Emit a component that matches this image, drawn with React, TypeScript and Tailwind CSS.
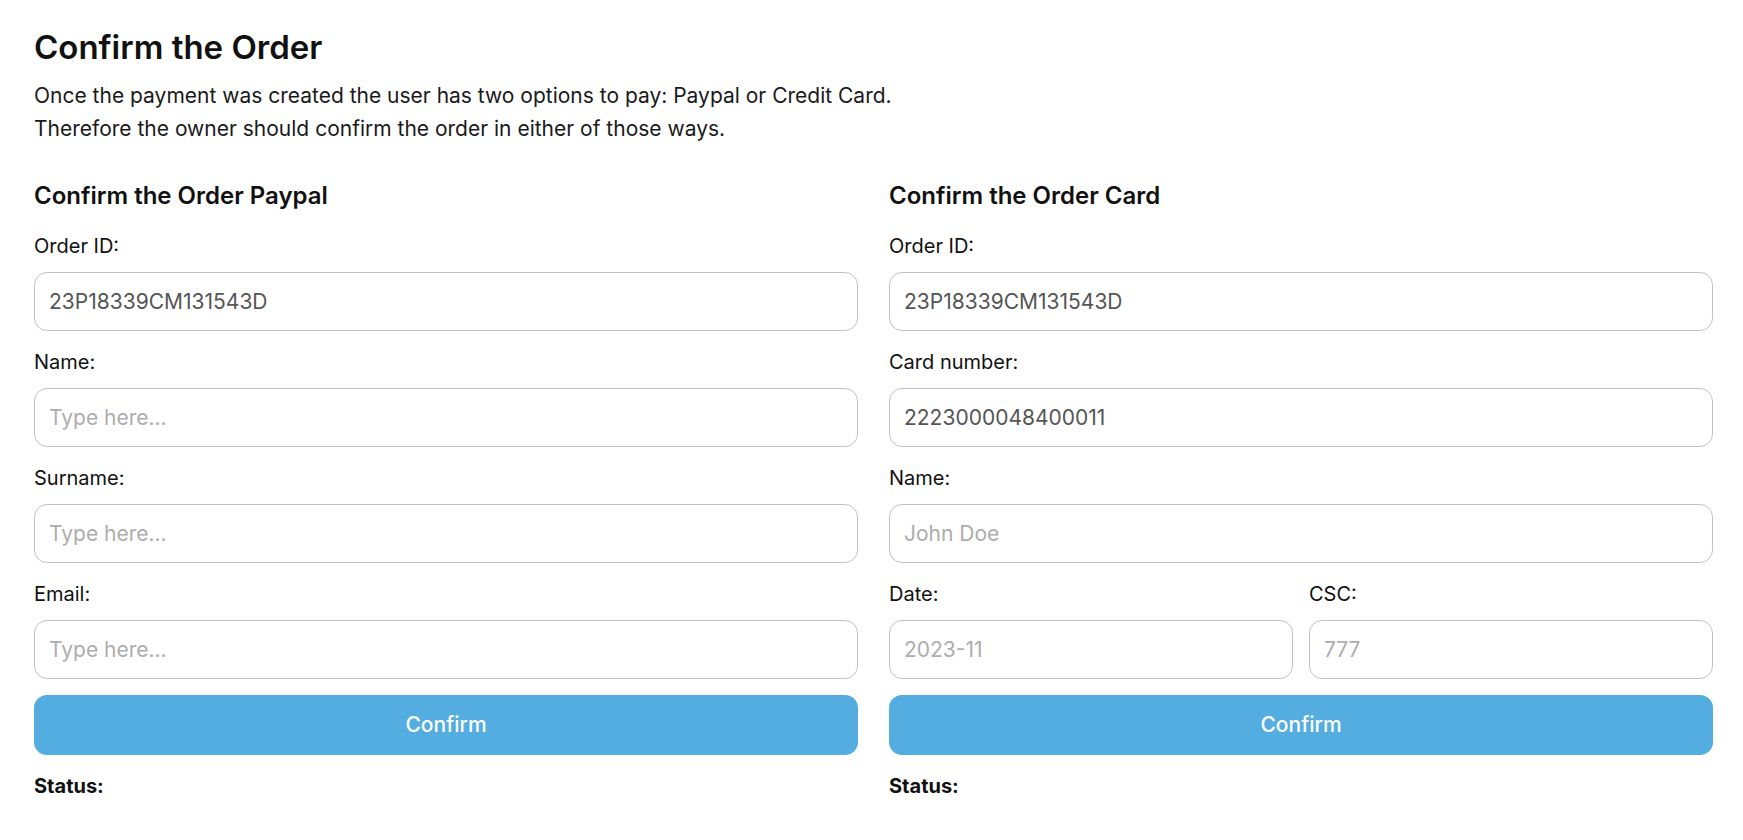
import React from "react";

type Field = {
  label: string;
  value?: string;
  placeholder?: string;
};

const paypalFields: Field[] = [
  { label: "Order ID:", value: "23P18339CM131543D" },
  { label: "Name:", placeholder: "Type here..." },
  { label: "Surname:", placeholder: "Type here..." },
  { label: "Email:", placeholder: "Type here..." },
];

const cardFields: Field[] = [
  { label: "Order ID:", value: "23P18339CM131543D" },
  { label: "Card number:", value: "2223000048400011" },
  { label: "Name:", placeholder: "John Doe" },
];

function Input({ field }: { field: Field }) {
  return (
    <input
      type="text"
      defaultValue={field.value}
      placeholder={field.placeholder}
      className="mt-[14px] h-[59px] w-full rounded-[13px] border border-[#c2c2c2] bg-white px-[14px] text-[21px] text-[#555] outline-none placeholder:text-[#adadad]"
    />
  );
}

function FieldRow({ field, first }: { field: Field; first?: boolean }) {
  return (
    <div className={first ? "" : "mt-[19px]"}>
      <label className="block text-[20px] leading-[24px] text-[#111]">{field.label}</label>
      <Input field={field} />
    </div>
  );
}

function ConfirmBlock({
  title,
  fields,
  children,
}: {
  title: string;
  fields: Field[];
  children?: React.ReactNode;
}) {
  return (
    <section className="flex flex-col">
      <h3 className="text-[24px] font-semibold leading-[30px] text-[#111]">{title}</h3>
      <div className="mt-[23px]">
        {fields.map((f, i) => (
          <FieldRow key={f.label + i} field={f} first={i === 0} />
        ))}
        {children}
      </div>
      <button className="mt-[16px] h-[60px] w-full rounded-[13px] bg-[#53ade0] text-[21px] font-medium text-white">
        Confirm
      </button>
      <p className="mt-[19px] text-[20px] font-bold leading-[24px] text-[#111]">Status:</p>
    </section>
  );
}

export default function App() {
  return (
    <main
      className="min-h-screen bg-white pl-[34px] pr-[30px] pt-[28px] text-[#111]"
      style={{ fontFamily: "Inter, 'Noto Sans', sans-serif" }}
    >
      <h1 className="text-[33px] font-semibold leading-[39px]">Confirm the Order</h1>
      <p className="mt-[12px] text-[21px] leading-[33.4px] text-[#1a1a1a]">
        Once the payment was created the user has two options to pay: Paypal or Credit Card.
        <br />
        Therefore the owner should confirm the order in either of those ways.
      </p>

      <div className="mt-[35px] grid grid-cols-2 gap-[31px]">
        <ConfirmBlock title="Confirm the Order Paypal" fields={paypalFields} />
        <ConfirmBlock title="Confirm the Order Card" fields={cardFields}>
          <div className="mt-[19px] grid grid-cols-2 gap-[16px]">
            <div>
              <label className="block text-[20px] leading-[24px] text-[#111]">Date:</label>
              <Input field={{ label: "Date:", placeholder: "2023-11" }} />
            </div>
            <div>
              <label className="block text-[20px] leading-[24px] text-[#111]">CSC:</label>
              <Input field={{ label: "CSC:", placeholder: "777" }} />
            </div>
          </div>
        </ConfirmBlock>
      </div>
    </main>
  );
}
